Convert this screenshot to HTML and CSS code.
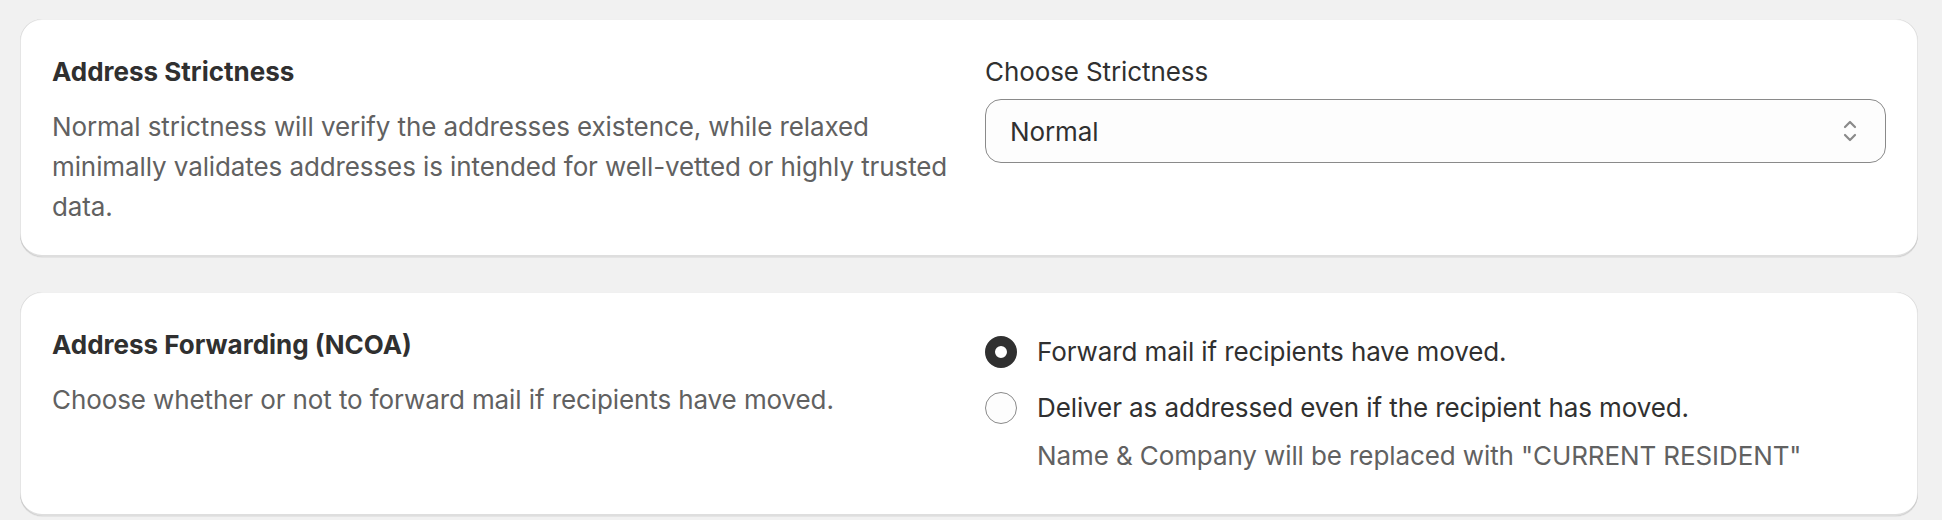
FILE: index.html
```html
<!DOCTYPE html>
<html lang="en">
<head>
  <meta charset="UTF-8" />
  <meta name="viewport" content="width=device-width, initial-scale=1" />
  <title>Address Settings</title>
  <link rel="stylesheet" href="styles.css">
</head>
<body>

  <main class="settings">

    <!-- Strictness -->
    <section class="card">
      <div class="card-info">
        <h2 class="card-title">Address Strictness</h2>
        <p class="card-text">Normal strictness will verify the addresses existence, while relaxed minimally validates addresses is intended for well-vetted or highly trusted data.</p>
      </div>
      <div class="card-control">
        <label class="field-label" for="strictness">Choose Strictness</label>
        <div class="select">
          <span class="select-value">Normal</span>
          <svg class="select-icon" width="14" height="24" viewBox="0 0 14 24" fill="none" stroke="#8a8a8a" stroke-width="2.2" stroke-linecap="round" stroke-linejoin="round">
            <path d="M2 8 L7 3 L12 8" />
            <path d="M2 16 L7 21 L12 16" />
          </svg>
        </div>
      </div>
    </section>

    <!-- Forwarding -->
    <section class="card">
      <div class="card-info">
        <h2 class="card-title">Address Forwarding (NCOA)</h2>
        <p class="card-text">Choose whether or not to forward mail if recipients have moved.</p>
      </div>
      <div class="card-control">
        <div class="radio-list">
          <div class="radio-item">
            <span class="radio checked"></span>
            <span class="radio-label">Forward mail if recipients have moved.</span>
          </div>
          <div class="radio-item">
            <span class="radio"></span>
            <div>
              <span class="radio-label">Deliver as addressed even if the recipient has moved.</span>
              <p class="radio-help">Name &amp; Company will be replaced with "CURRENT RESIDENT"</p>
            </div>
          </div>
        </div>
      </div>
    </section>

  </main>

</body>
</html>
```

FILE: styles.css
```css
body {
  margin: 0;
  background-color: #f1f1f1;
  font-family: 'Inter', 'Noto Sans', sans-serif;
  letter-spacing: -0.1px;
  color: #303030;
}

.settings {
  display: flex;
  flex-direction: column;
  gap: 35px;
  padding: 19px 24px 8px 20px;
}

/* Card */
.card {
  background: #fff;
  border-radius: 22px;
  padding: 33px 32px 30px;
  display: grid;
  grid-template-columns: 1fr 1fr;
  column-gap: 32px;
  box-shadow:
    0 1px 0 rgba(0, 0, 0, 0.05),
    inset 0 -2px 0 rgba(0, 0, 0, 0.13),
    inset 0 1px 0 rgba(0, 0, 0, 0.06),
    inset 1px 0 0 rgba(0, 0, 0, 0.1),
    inset -1px 0 0 rgba(0, 0, 0, 0.1);
}

.card-title {
  margin: 0;
  font-size: 26px;
  font-weight: 650;
  line-height: 40px;
  letter-spacing: 0;
}

.card-text {
  margin: 15px 0 0;
  font-size: 26px;
  line-height: 40px;
  color: #616161;
}

/* Select */
.field-label {
  display: block;
  font-size: 26px;
  line-height: 40px;
  margin-bottom: 7px;
}

.select {
  height: 64px;
  box-sizing: border-box;
  border: 1px solid #8a8a8a;
  border-radius: 16px;
  background: #fdfdfd;
  display: flex;
  align-items: center;
  justify-content: space-between;
  padding: 0 28px 0 24px;
}

.select-value {
  font-size: 26px;
}

/* Radios */
.radio-list {
  display: flex;
  flex-direction: column;
  gap: 16px;
  padding: 7px 0 10px;
}

.radio-item {
  display: flex;
  align-items: flex-start;
  gap: 20px;
}

.radio {
  width: 32px;
  height: 32px;
  margin-top: 4px;
  box-sizing: border-box;
  border-radius: 50%;
  border: 1px solid #8a8a8a;
  background: #fdfdfd;
  flex-shrink: 0;
}

.radio.checked {
  border: 10px solid #303030;
  background: #fff;
}

.radio-label {
  font-size: 26px;
  line-height: 40px;
}

.radio-help {
  margin: 8px 0 0;
  font-size: 26px;
  line-height: 40px;
  color: #616161;
}
```
